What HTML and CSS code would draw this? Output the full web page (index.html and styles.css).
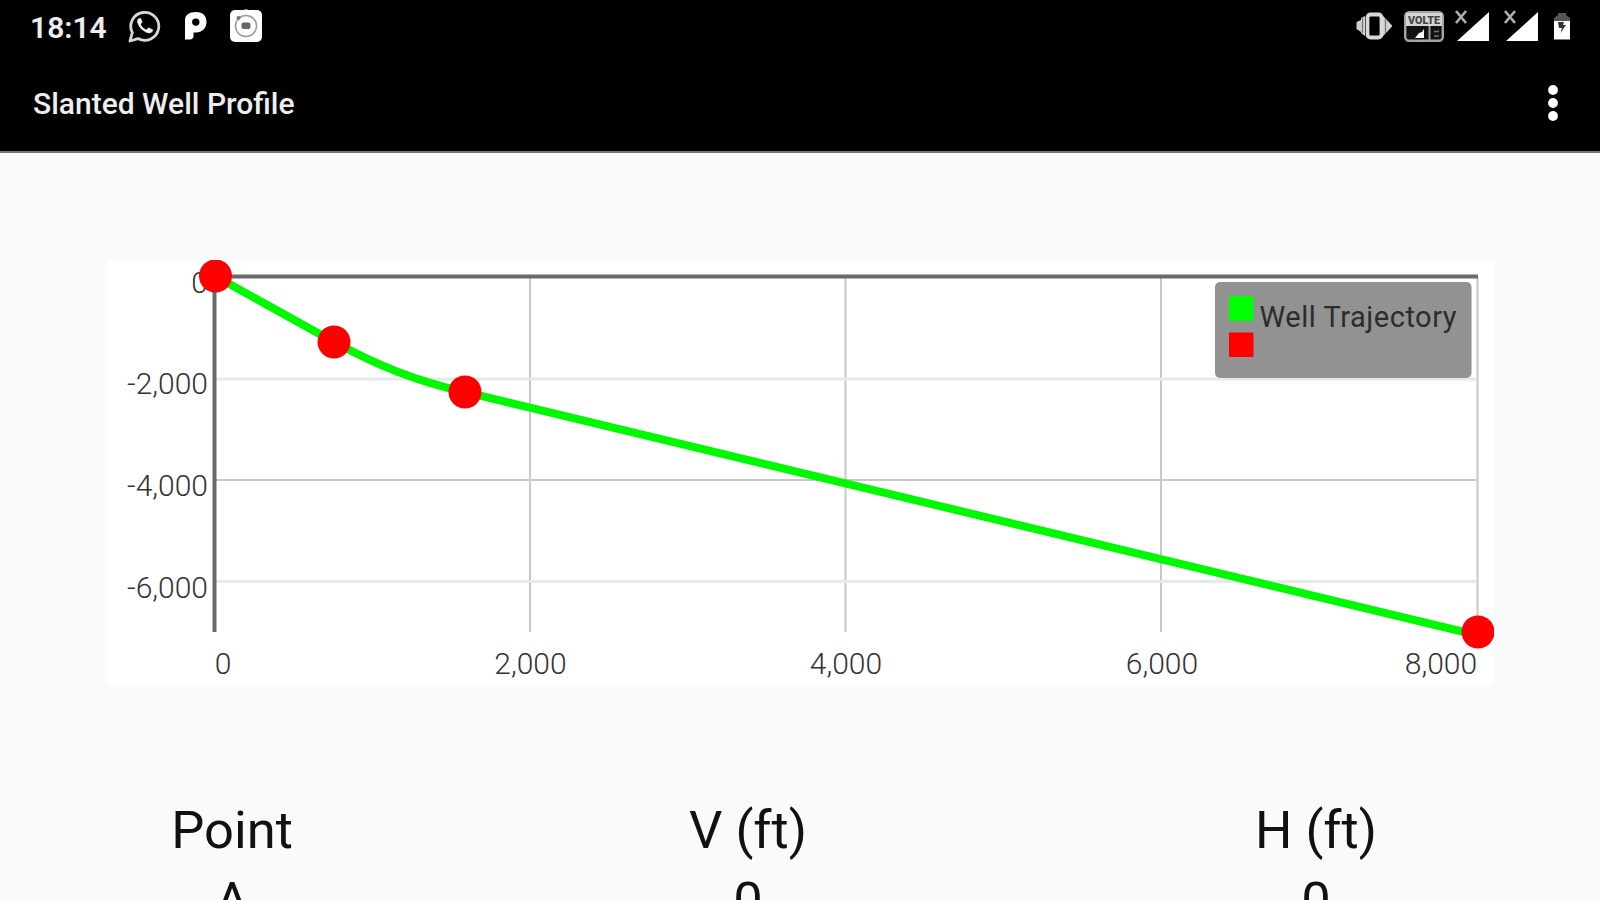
FILE: index.html
```html
<!DOCTYPE html>
<html lang="en">
<head>
  <meta charset="UTF-8">
  <title>Slanted Well Profile</title>
  <link rel="stylesheet" href="styles.css">
</head>
<body>
  <header class="header">
    <div class="status-bar">
      <span class="clock">18:14</span>
      <svg class="icon-whatsapp" width="34" height="34" viewBox="0 0 34 34" fill="none">
        <path d="M2 32l2.3-8.3A14 14 0 1 1 10 29.6z" stroke="#d8d8d8" stroke-width="2.800" stroke-linejoin="round"/>
        <path d="M11.2 9.2c-2 .7-2.6 3-1.5 5.400 1.800 4.500 5.600 8.200 10.200 9.500 2.500.6 4.900-.8 5.200-3.300l-4.500-2.300-2.200 2.200c-2.600-1-4.600-3-5.700-5.500l1.800-2.200-1.900-3.900z" fill="#f0f0f0"/>
      </svg>
      <svg class="icon-p" width="22" height="28" viewBox="0 0 22 28">
        <path fill="#fff" fill-rule="evenodd" d="M0 8C0 3 4 0 11 0s10.500 4 10.500 10-4.500 10.500-10.500 10.500H8.500V24c0 2-1.500 3.500-3.500 3.500H0zM10.800 6.400a3.700 3.700 0 1 0 0 7.400 3.700 3.700 0 0 0 0-7.400z"/>
      </svg>
      <svg class="icon-camera" width="34" height="34" viewBox="0 0 34 34">
        <path d="M13 1.500L17 0l4 1.500z" fill="#bbb"/>
        <rect x="1" y="1" width="32" height="32" rx="5" fill="#fff"/>
        <circle cx="17" cy="17" r="10.500" fill="none" stroke="#999" stroke-width="1.500"/>
        <rect x="12.500" y="13.500" width="9" height="6.500" rx="2" fill="#666"/>
        <circle cx="9.500" cy="9" r="2" fill="#777"/>
      </svg>
      <span class="spacer"></span>
      <svg class="icon-vibrate" width="36" height="28" viewBox="0 0 36 28">
        <path d="M9 4v20l-4-3v-1l-4.500-3v-7L5 8V6zM27 4v20l4-4 5-5.500v-1L31 8z" fill="#d0d0d0"/>
        <path d="M6.500 6v15M29.500 6v15" stroke="#777" stroke-width="1.200"/>
        <rect x="11.500" y="2.500" width="14" height="23" rx="3" fill="#000" stroke="#d8d8d8" stroke-width="3.800"/>
      </svg>
      <svg class="icon-volte" width="40" height="31" viewBox="0 0 40 31">
        <rect x="1.200" y="1.200" width="37.600" height="28.600" rx="4" fill="#111" stroke="#a5a5a5" stroke-width="2.400"/>
        <path d="M2 2h36v13H2z" fill="#d5d5d5"/>
        <text x="20" y="12.500" text-anchor="middle" textLength="32" lengthAdjust="spacingAndGlyphs">VOLTE</text>
        <path d="M25.500 15v15" stroke="#999" stroke-width="2"/>
        <path d="M11 27l4-5 3-1 2-3v9z" fill="#fff"/>
        <path d="M30 20.500h5M30 25h5" stroke="#777" stroke-width="1.500"/>
      </svg>
      <svg class="icon-signal" width="34" height="32" viewBox="0 0 34 32">
        <path d="M34 2v29H2z" fill="#fff"/>
        <path d="M1 1l10 12M11 1L1 13" stroke="#b0b0b0" stroke-width="2.600"/>
      </svg>
      <svg class="icon-signal" width="34" height="32" viewBox="0 0 34 32">
        <path d="M34 2v29H2z" fill="#fff"/>
        <path d="M1 1l10 12M11 1L1 13" stroke="#b0b0b0" stroke-width="2.600"/>
      </svg>
      <svg class="icon-battery" width="18" height="28" viewBox="0 0 18 28">
        <path d="M1 10V6l4-3V1h8v2l4 3v4z" fill="#555"/>
        <path d="M1 9h16v18.500H1z" fill="#fff"/>
        <path d="M5 10l1 6h3l-1.500 5 5.500-8h-3l1-3" fill="#333"/>
      </svg>
    </div>
    <div class="app-bar">
      <h1 class="title">Slanted Well Profile</h1>
      <svg class="menu" width="12" height="38" viewBox="0 0 12 38" fill="#fff">
        <circle cx="6" cy="6" r="4.900"/>
        <circle cx="6" cy="19" r="4.900"/>
        <circle cx="6" cy="32" r="4.900"/>
      </svg>
    </div>
  </header>

  <main>
    <svg class="chart" width="1387" height="425" viewBox="107 260 1387 425">
      <!-- grid -->
      <g class="grid-v">
        <path d="M530 277v355M845.500 277v355M1161 277v355M1477.500 277v355"/>
      </g>
      <g class="grid-h">
        <path d="M215 379h1262M215 581.500h1262"/>
        <path class="dark" d="M215 480h1262"/>
      </g>
      <path class="axis" d="M214.500 632V276.500H1478"/>

      <g class="labels y">
        <text x="208" y="293">0</text>
        <text x="208" y="394">-2,000</text>
        <text x="208" y="496">-4,000</text>
        <text x="208" y="598">-6,000</text>
      </g>
      <g class="labels x">
        <text x="223" y="674">0</text>
        <text x="530.500" y="674">2,000</text>
        <text x="846" y="674">4,000</text>
        <text x="1162" y="674">6,000</text>
        <text x="1441" y="674">8,000</text>
      </g>

      <!-- trajectory -->
      <path class="line" d="M215 276L334 342C377 365 415 381 465 392L1464 632H1478"/>
      <g class="points">
        <circle cx="215.500" cy="276" r="16.500"/>
        <circle cx="334" cy="342" r="16.500"/>
        <circle cx="465" cy="392" r="16.500"/>
        <circle cx="1478" cy="632" r="16.500"/>
      </g>

      <!-- legend -->
      <rect x="1215" y="282" width="256.500" height="96" rx="5" fill="#929292"/>
      <rect x="1229" y="296" width="24.500" height="25" fill="#0f0"/>
      <rect x="1229" y="332.500" width="24.500" height="24.500" fill="#f00"/>
      <text class="legend" x="1259.500" y="327" textLength="197">Well Trajectory</text>
    </svg>

    <div class="table">
      <span>Point</span>
      <span>V (ft)</span>
      <span>H (ft)</span>
      <span>A</span>
      <span>0</span>
      <span>0</span>
    </div>
  </main>
</body>
</html>
```
FILE: styles.css
```css
body {
  margin: 0;
  height: 900px;
  overflow: hidden;
  background: #fafafa;
  color: #111;
  font-family: Roboto, sans-serif;
}

.header {
  box-sizing: border-box;
  height: 153px;
  background: #000;
  border-bottom: 2px solid #777;
  color: #eee;
}

.status-bar {
  display: flex;
  align-items: center;
  height: 52px;
  padding: 0 29px 0 30px;
}

.clock {
  width: 98px;
  font-size: 30px;
  font-weight: 600;
  line-height: 52px;
  padding-top: 3px;
}

.icon-p {
  margin-left: 23px;
}

.icon-camera {
  margin-left: 22px;
}

.spacer {
  flex: 1;
}

.icon-volte {
  margin-left: 12px;
}

.icon-volte text {
  font-size: 11px;
  font-weight: 900;
  fill: #444;
}

.icon-signal {
  margin-left: 11px;
}

.icon-signal + .icon-signal {
  margin-left: 15px;
}

.icon-battery {
  margin-left: 15px;
}

.app-bar {
  display: flex;
  align-items: center;
  justify-content: space-between;
  height: 101px;
  padding: 0 41px 0 33px;
}

.title {
  margin: 2px 0 0;
  font-size: 30px;
  font-weight: 500;
}

.chart {
  display: block;
  margin: 107px 0 0 107px;
  background: #fff;
}

.grid-v {
  stroke: #c8c8c8;
  stroke-width: 2;
}

.grid-h {
  stroke: #e8e8e8;
  stroke-width: 3;
}

.grid-h .dark {
  stroke: #c8c8c8;
  stroke-width: 2;
}

.axis {
  fill: none;
  stroke: #6a6a6a;
  stroke-width: 4;
}

.labels {
  font-size: 30px;
  font-weight: 350;
  fill: #333;
}

.labels.x {
  text-anchor: middle;
}

.labels.y {
  text-anchor: end;
}

.line {
  fill: none;
  stroke: #00f800;
  stroke-width: 8;
}

.points {
  fill: #f00;
}

.legend {
  font-size: 29px;
  fill: #2c2c2c;
}

.table {
  display: grid;
  grid-template-columns: 464px 568px 568px;
  grid-auto-rows: 71px;
  margin-top: 109px;
  font-size: 52.5px;
  line-height: 72px;
  text-align: center;
}
```
